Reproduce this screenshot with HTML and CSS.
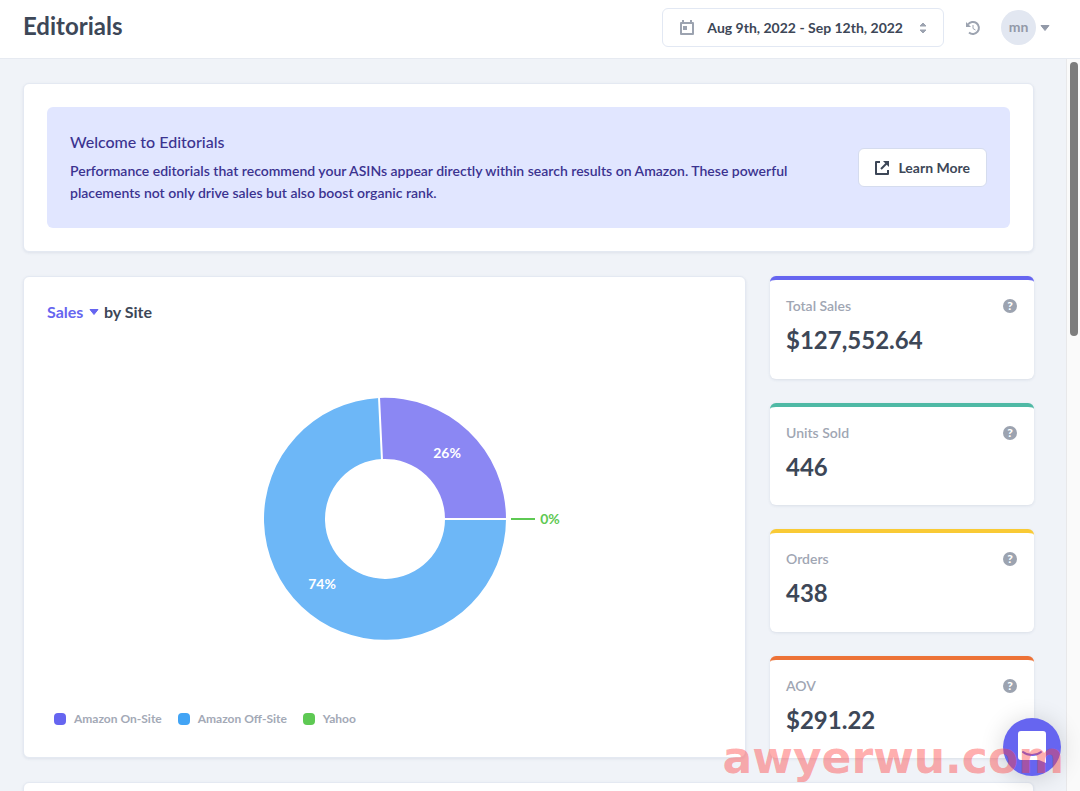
FILE: index.html
```html
<!DOCTYPE html>
<html lang="en">
<head>
    <meta charset="UTF-8">
    <meta name="viewport" content="width=device-width, initial-scale=1.0">
    <title>Editorials</title>
    <link rel="stylesheet" href="styles.css">
</head>
<body>
    <header class="topbar">
        <h1>Editorials</h1>
        <div class="topbar-actions">
            <button type="button" class="date-range">
                <svg class="icon" width="16" height="16" viewBox="0 0 16 16" aria-hidden="true">
                    <path d="M2 3h12v11H2z" fill="none" stroke="currentColor" stroke-width="2" stroke-linejoin="round"/>
                    <path d="M2 2h12v2H2zM3 0h2v3H3zM11 0h2v3h-2zM4 6h4v4H4z" fill="currentColor"/>
                </svg>
                <span>Aug 9th, 2022 - Sep 12th, 2022</span>
                <svg class="icon" width="8" height="12" viewBox="0 0 8 12" aria-hidden="true">
                    <path d="M4 1l3 3H1zM4 11L1 8h6z" fill="currentColor" stroke="currentColor" stroke-linejoin="round"/>
                </svg>
            </button>
            <button type="button" class="history" aria-label="History">
                <svg width="16" height="16" viewBox="0 0 16 16" aria-hidden="true">
                    <path d="M3 4.500A6 6 0 1 1 4 12.500" fill="none" stroke="currentColor" stroke-width="2"/>
                    <path d="M1 2v5h5z" fill="currentColor"/>
                    <path d="M8 5v3.500l2.500 1.500" fill="none" stroke="currentColor"/>
                </svg>
            </button>
            <button type="button" class="account" aria-label="Account menu">
                <span class="avatar">mn</span>
                <svg width="10" height="6" viewBox="0 0 10 6" aria-hidden="true">
                    <path d="M1 .500h8L5 5.500z" fill="currentColor" stroke="currentColor" stroke-linejoin="round"/>
                </svg>
            </button>
        </div>
    </header>

    <div class="page">
        <main class="content">
            <section class="card">
                <div class="banner">
                    <div class="banner-text">
                        <h2>Welcome to Editorials</h2>
                        <p>Performance editorials that recommend your ASINs appear directly within search results on Amazon. These powerful placements not only drive sales but also boost organic rank.</p>
                    </div>
                    <a href="#" class="learn-more">
                        <svg width="14" height="14" viewBox="0 0 14 14" aria-hidden="true">
                            <path d="M5 1H1v12h12V9" fill="none" stroke="currentColor" stroke-width="2" stroke-linejoin="round"/>
                            <path d="M6 8l6-6" stroke="currentColor" stroke-width="2"/>
                            <path d="M8 0h6v6z" fill="currentColor"/>
                        </svg>
                        Learn More
                    </a>
                </div>
            </section>

            <div class="overview">
                <section class="card chart">
                    <div class="chart-title">
                        <select id="metric" class="metric">
                            <option>Sales</option>
                        </select>
                        <svg class="caret" width="10" height="6" viewBox="0 0 10 6" aria-hidden="true">
                            <path d="M1 .500h8L5 5.500z" fill="currentColor" stroke="currentColor" stroke-linejoin="round"/>
                        </svg>
                        <label for="metric">by Site</label>
                    </div>
                    <svg class="donut" viewBox="-180 -130 360 260" role="img" aria-label="Sales by site">
                        <path d="M121 0A121 121 0 0 0 -6 -121L-3 -60A60 60 0 0 1 60 0z" fill="#8b87f3"/>
                        <path d="M-6 -121A121 121 0 1 0 121 0H60A60 60 0 1 1 -3 -60z" fill="#6db7f7"/>
                        <path d="M-6 -122L-3 -59M59 0H122" stroke="#fff" stroke-width="2"/>
                        <path d="M126 0H150" stroke="#5ec953" stroke-width="2"/>
                        <text class="share" x="62" y="-61">26%</text>
                        <text class="share" x="-63" y="70">74%</text>
                        <text class="share share-yahoo" x="165" y="5">0%</text>
                    </svg>
                    <ul class="legend">
                        <li><span class="swatch on-site"></span>Amazon On-Site</li>
                        <li><span class="swatch off-site"></span>Amazon Off-Site</li>
                        <li><span class="swatch yahoo"></span>Yahoo</li>
                    </ul>
                </section>

                <div class="stats">
                    <section class="stat stat-sales">
                        <div class="stat-head">
                            <h3>Total Sales</h3>
                            <button type="button" class="help" aria-label="About total sales">?</button>
                        </div>
                        <p>$127,552.64</p>
                    </section>
                    <section class="stat stat-units">
                        <div class="stat-head">
                            <h3>Units Sold</h3>
                            <button type="button" class="help" aria-label="About units sold">?</button>
                        </div>
                        <p>446</p>
                    </section>
                    <section class="stat stat-orders">
                        <div class="stat-head">
                            <h3>Orders</h3>
                            <button type="button" class="help" aria-label="About orders">?</button>
                        </div>
                        <p>438</p>
                    </section>
                    <section class="stat stat-aov">
                        <div class="stat-head">
                            <h3>AOV</h3>
                            <button type="button" class="help" aria-label="About AOV">?</button>
                        </div>
                        <p>$291.22</p>
                    </section>
                </div>
            </div>

            <section class="card"></section>
        </main>
        <div class="scrollbar"><div class="thumb"></div></div>
    </div>

    <button type="button" class="chat" aria-label="Open chat">
        <svg width="28" height="32" viewBox="0 0 28 32" aria-hidden="true">
            <path d="M3 0h22a3 3 0 0 1 3 3v29l-7-3H3a3 3 0 0 1-3-3V3a3 3 0 0 1 3-3z" fill="#fff"/>
            <path d="M5 21c5 4 13 4 18 0" fill="none" stroke="#6665f0" stroke-width="2" stroke-linecap="round"/>
        </svg>
    </button>
    <div class="watermark">awyerwu.com</div>
</body>
</html>
```
FILE: styles.css
```css
* {
    box-sizing: border-box;
}

body {
    display: flex;
    flex-direction: column;
    height: 100vh;
    margin: 0;
    overflow: hidden;
    font-family: Lato, "Open Sans", sans-serif;
    font-size: 14px;
    color: #3d4757;
    background-color: #fff;
}

h1, h2, h3, p, ul {
    margin: 0;
    padding: 0;
}

button {
    padding: 0;
    border: none;
    background: none;
    font: inherit;
    color: inherit;
    cursor: pointer;
}

svg {
    display: block;
    flex-shrink: 0;
}

/* Top bar */
.topbar {
    display: flex;
    align-items: flex-start;
    justify-content: space-between;
    flex-shrink: 0;
    padding: 8px 30px 11px 23px;
    border-bottom: 1px solid #e6eaf1;
}

.topbar h1 {
    font-size: 24px;
    line-height: 36px;
    font-weight: 700;
}

.topbar-actions {
    display: flex;
    align-items: center;
}

.date-range {
    display: flex;
    align-items: center;
    gap: 12px;
    height: 39px;
    padding: 0 16px;
    border: 1px solid #e2e8f3;
    border-radius: 6px;
    font-weight: 700;
}

.date-range span {
    margin-right: 4px;
}

.icon {
    color: #9ca3b0;
}

.history {
    margin-left: 21px;
    color: #9ca3b0;
}

.account {
    display: flex;
    align-items: center;
    gap: 4px;
    margin-left: 20px;
    color: #9299a8;
}

.avatar {
    width: 35px;
    height: 35px;
    border-radius: 50%;
    background-color: #e2e7f1;
    line-height: 34px;
    font-weight: 700;
}

/* Page */
.page {
    display: flex;
    flex: 1;
    min-height: 0;
    overflow: hidden;
    background-color: #f0f3f8;
}

.content {
    display: flex;
    flex: 1;
    flex-direction: column;
    gap: 24px;
    padding: 24px 32px 0 23px;
}

.card {
    flex-shrink: 0;
    padding: 23px;
    border: 1px solid #e4e9f2;
    border-radius: 6px;
    background-color: #fff;
    box-shadow: 0 1px 3px rgba(60, 80, 120, 0.1);
}

.banner {
    display: flex;
    align-items: center;
    justify-content: space-between;
    gap: 48px;
    padding: 24px 23px;
    border-radius: 6px;
    background-color: #e1e6ff;
    color: #3b3390;
}

.banner h2 {
    font-size: 16px;
    line-height: 22px;
    font-weight: 500;
}

.banner p {
    margin-top: 7px;
    line-height: 22px;
    font-weight: 600;
}

.learn-more {
    display: flex;
    align-items: center;
    flex-shrink: 0;
    gap: 9px;
    height: 39px;
    padding: 0 16px;
    border: 1px solid #d5dcee;
    border-radius: 6px;
    background-color: #fff;
    color: #3d4757;
    font-weight: 700;
    text-decoration: none;
}

.overview {
    display: grid;
    grid-template-columns: 1fr 264px;
    flex-shrink: 0;
    gap: 24px;
}

/* Donut chart */
.chart {
    padding-bottom: 30px;
}

.chart-title {
    display: flex;
    align-items: center;
    gap: 5px;
    font-size: 16px;
    line-height: 24px;
    font-weight: 700;
}

.metric {
    padding: 0;
    border: none;
    appearance: none;
    background: none;
    font: inherit;
    color: #6665f0;
}

.caret {
    color: #6665f0;
}

.donut {
    width: 360px;
    height: 260px;
    margin: 65px auto 62px;
}

.share {
    fill: #fff;
    font-size: 14px;
    font-weight: 700;
    text-anchor: middle;
}

.share-yahoo {
    fill: #5ec953;
}

.legend {
    display: flex;
    gap: 16px;
    padding-left: 7px;
    list-style: none;
    font-size: 12px;
    line-height: 16px;
    font-weight: 700;
    color: #a3a9b6;
}

.legend li {
    display: flex;
    align-items: center;
    gap: 8px;
}

.swatch {
    width: 12px;
    height: 12px;
    border-radius: 4px;
}

.on-site {
    background-color: #6665f0;
}

.off-site {
    background-color: #42a4f5;
}

.yahoo {
    background-color: #5ec953;
}

/* Stat cards */
.stats {
    display: grid;
    gap: 24px;
}

.stat {
    padding: 14px 17px 0 16px;
    border-top: 4px solid;
    border-radius: 6px;
    background-color: #fff;
    box-shadow: 0 1px 3px rgba(60, 80, 120, 0.12);
}

.stat-sales {
    border-top-color: #6665f0;
}

.stat-units {
    border-top-color: #4fb9a5;
}

.stat-orders {
    border-top-color: #f9ca35;
}

.stat-aov {
    border-top-color: #ed7237;
}

.stat-head {
    display: flex;
    align-items: center;
    justify-content: space-between;
}

.stat h3 {
    font-size: 14px;
    line-height: 24px;
    font-weight: 600;
    color: #a0a6b3;
}

.stat p {
    margin-top: 4px;
    font-size: 24px;
    line-height: 36px;
    font-weight: 700;
    color: #3d4757;
}

.help {
    width: 14px;
    height: 14px;
    border-radius: 50%;
    background-color: #9ca3b0;
    color: #fff;
    font-size: 12px;
    line-height: 14px;
    font-weight: 900;
}

/* Scrollbar */
.scrollbar {
    flex-shrink: 0;
    width: 14px;
    padding: 3px 2px 0 3px;
    border-left: 1px solid #e8e8ea;
    background-color: #fafafa;
}

.thumb {
    height: 274px;
    border-radius: 4px;
    background-color: #7d7d7d;
}

/* Overlays */
.chat {
    position: absolute;
    right: 19px;
    bottom: 15px;
    display: flex;
    align-items: center;
    justify-content: center;
    width: 58px;
    height: 58px;
    border-radius: 50%;
    background-color: #6665f0;
    box-shadow: 0 2px 24px rgba(0, 0, 0, 0.16);
}

.watermark {
    position: absolute;
    right: 16px;
    bottom: 6px;
    font-family: "DejaVu Sans", sans-serif;
    font-size: 44px;
    line-height: 54px;
    font-weight: 700;
    color: rgba(255, 60, 60, 0.42);
    pointer-events: none;
}
```
